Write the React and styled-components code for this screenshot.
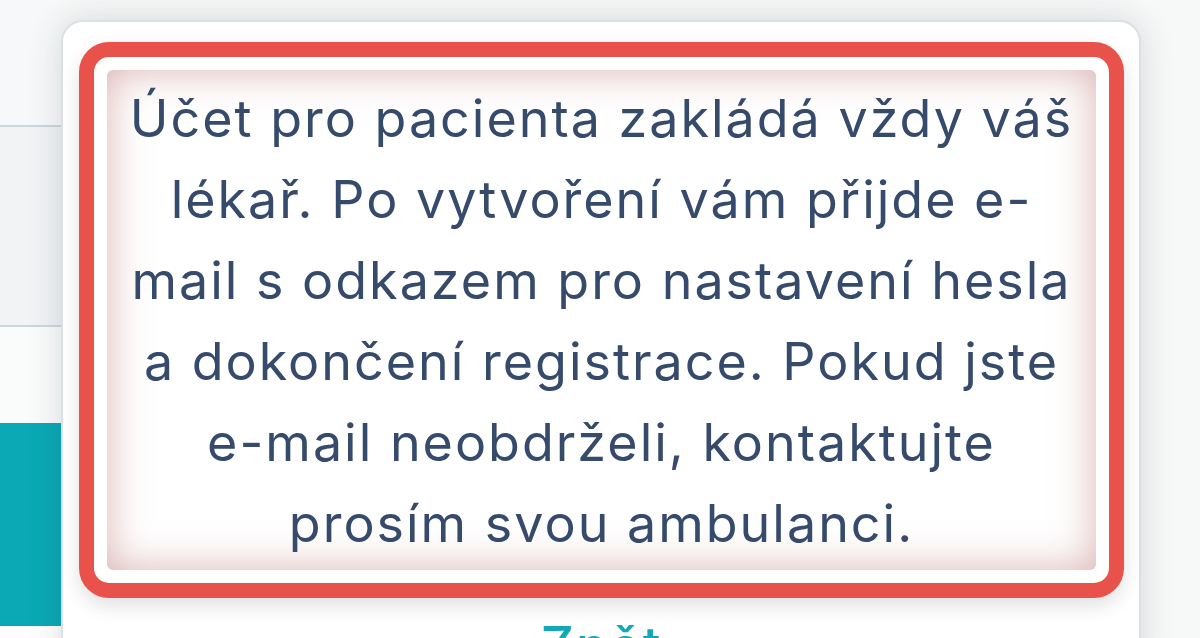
import React from "react";
import styled, { createGlobalStyle } from "styled-components";

const GlobalStyle = createGlobalStyle`
  html, body {
    margin: 0;
    padding: 0;
    height: 100%;
    overflow: hidden;
    background: #f6f7f8;
    font-family: Inter, "Noto Sans", sans-serif;
  }
  #root {
    height: 100%;
  }
`;

const Page = styled.div`
  display: flex;
  height: 638px;
  overflow: hidden;
  background: #f7f8f8;
`;

const SideStrip = styled.div`
  width: 61px;
  flex-shrink: 0;
  display: flex;
  flex-direction: column;
`;

const SideBand = styled.div`
  height: ${(p) => p.$h}px;
  background: ${(p) => p.$bg};
  border-bottom: ${(p) => (p.$line ? "2px solid #cdd8dc" : "none")};
  box-sizing: border-box;
`;

const Card = styled.div`
  margin-top: 20px;
  width: 1080px;
  height: 660px;
  box-sizing: border-box;
  background: #ffffff;
  border: 2px solid #d9e1e4;
  border-radius: 22px;
  box-shadow: 0 0 34px rgba(40, 50, 60, 0.16);
  padding: 20px 15px 0 16px;
  display: flex;
  flex-direction: column;
  align-items: center;
`;

const RedFrame = styled.div`
  width: 100%;
  box-sizing: border-box;
  border: 15px solid #e8524a;
  border-radius: 30px;
  padding: 13px;
  background: #ffffff;
  box-shadow: 0 8px 18px rgba(60, 40, 40, 0.14);
`;

const Notice = styled.p`
  margin: 0;
  height: 500px;
  box-sizing: border-box;
  padding: 8px 4px 6px;
  border-radius: 6px;
  box-shadow: inset 0 0 42px rgba(190, 115, 115, 0.55);
  text-align: center;
  color: #364a6c;
  font-size: 52px;
  line-height: 81px;
  letter-spacing: 2px;
  font-weight: 400;
`;

const BackLink = styled.a`
  margin-top: 18px;
  color: #14a7b4;
  font-size: 52px;
  font-weight: 500;
  letter-spacing: 2px;
  text-decoration: none;
  line-height: 60px;
`;

export default function App() {
  return (
    <>
      <GlobalStyle />
      <Page>
        <SideStrip>
          <SideBand $h={127} $bg="#f7f8f9" $line />
          <SideBand $h={200} $bg="#f1f3f5" $line />
          <SideBand $h={96} $bg="#fafbfb" />
          <SideBand $h={203} $bg="#0aa9b5" />
          <SideBand $h={12} $bg="#ffffff" />
        </SideStrip>
        <Card>
          <RedFrame>
            <Notice>
              Účet pro pacienta zakládá vždy váš
              <br />
              lékař. Po vytvoření vám přijde e-
              <br />
              mail s odkazem pro nastavení hesla
              <br />
              a dokončení registrace. Pokud jste
              <br />
              e-mail neobdrželi, kontaktujte
              <br />
              prosím svou ambulanci.
            </Notice>
          </RedFrame>
          <BackLink href="#">Zpět</BackLink>
        </Card>
      </Page>
    </>
  );
}
